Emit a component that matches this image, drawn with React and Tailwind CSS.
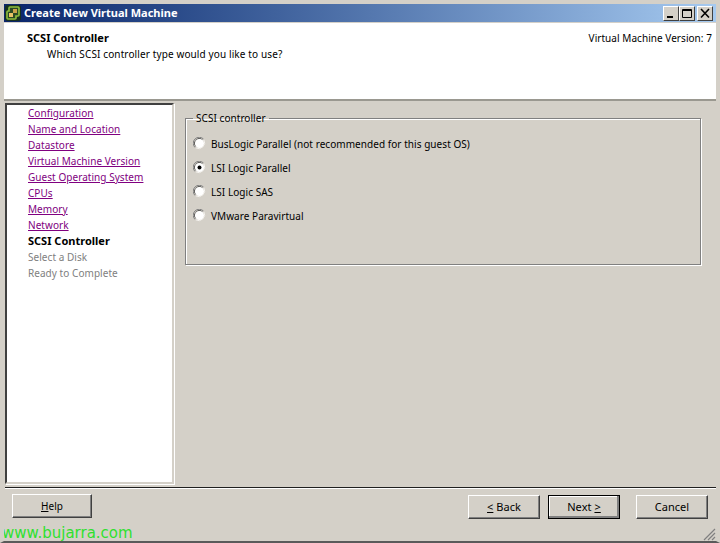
const font = "font-['Noto_Sans','Liberation_Sans',sans-serif]";

const visited = [
  "Configuration",
  "Name and Location",
  "Datastore",
  "Virtual Machine Version",
  "Guest Operating System",
  "CPUs",
  "Memory",
  "Network",
];

const options = [
  { label: "BusLogic Parallel (not recommended for this guest OS)" },
  { label: "LSI Logic Parallel", checked: true },
  { label: "LSI Logic SAS" },
  { label: "VMware Paravirtual" },
];

function VmLogo() {
  return (
    <svg width="16" height="16" viewBox="0 0 16 16" className="shrink-0">
      <rect x="0" y="0" width="16" height="16" rx="3" fill="#16301f" />
      <path d="M5 2h8a1 1 0 0 1 1 1v7a1 1 0 0 1-1 1h-2v2a1 1 0 0 1-1 1H3a1 1 0 0 1-1-1V7a1 1 0 0 1 1-1h1V3a1 1 0 0 1 1-1z" fill="#2b4a24" stroke="#8fc03c" strokeWidth="1.6" />
      <rect x="4" y="8" width="4" height="4" fill="#e8c468" />
      <rect x="8" y="4" width="4" height="4" fill="#c9a24a" />
    </svg>
  );
}

function CaptionButton({ children }) {
  return (
    <div className="w-[16px] h-[15px] bg-[#d4d0c8] border border-t-white border-l-white border-r-[#404040] border-b-[#404040] flex items-center justify-center">
      <svg width="12" height="11" viewBox="0 0 12 11">{children}</svg>
    </div>
  );
}

function Radio({ checked }) {
  return (
    <svg width="13" height="13" viewBox="0 0 13 13" className="shrink-0">
      <path d="M2 10.5A6 6 0 0 1 10.5 2" fill="none" stroke="#808080" strokeWidth="1" />
      <path d="M3 9.5A4.6 4.6 0 0 1 9.5 3" fill="none" stroke="#404040" strokeWidth="1" />
      <circle cx="6.5" cy="6.5" r="4.5" fill="#ffffff" />
      <path d="M10.8 2.6A6 6 0 0 1 2.6 10.8" fill="none" stroke="#f4f2ee" strokeWidth="1" />
      {checked && <circle cx="6.5" cy="6.5" r="2" fill="#000000" />}
    </svg>
  );
}

function Button({ className, children }) {
  return (
    <button className={"bg-[#d4d0c8] border border-t-white border-l-white border-r-[#404040] border-b-[#404040] text-black " + className}>
      {children}
    </button>
  );
}

export default function App() {
  return (
    <div className={"relative w-[720px] h-[543px] overflow-hidden bg-[#d4d0c8] border-t-[4px] border-l-[4px] border-r-[4px] border-b-[2px] border-t-[#d4d0c8] border-l-[#d4d0c8] border-r-[#d4d0c8] border-b-[#5a5a5a] flex flex-col text-[10px] tracking-[0.05px] leading-[16px] text-black " + font}>
      {/* Title bar */}
      <div className="h-[18px] shrink-0 bg-gradient-to-r from-[#0a246a] to-[#a6caf0] flex items-center justify-between pr-[3px]">
        <div className="flex items-center gap-[3px] pl-[1px]">
          <VmLogo />
          <span className="text-[11px] tracking-normal font-bold text-white">Create New Virtual Machine</span>
        </div>
        <div className="flex items-center">
          <CaptionButton>
            <rect x="2" y="8" width="6" height="2" fill="#000" />
          </CaptionButton>
          <CaptionButton>
            <path d="M1.5 1.5h9v8h-9z M1 2.5h10" fill="none" stroke="#000" strokeWidth="1" />
          </CaptionButton>
          <div className="ml-[2px]">
            <CaptionButton>
              <path d="M2 1l8 8.5M10 1l-8 8.5" fill="none" stroke="#000" strokeWidth="1.6" />
            </CaptionButton>
          </div>
        </div>
      </div>

      {/* Header */}
      <div className="h-[78px] shrink-0 mt-[1px] bg-white border-b-2 border-b-[#9a9890] flex justify-between pl-[23px] pr-[4px] pt-[7px]">
        <div>
          <div className="font-bold text-[11px] tracking-normal">SCSI Controller</div>
          <div className="pl-[20px] tracking-[0.12px]">Which SCSI controller type would you like to use?</div>
        </div>
        <div>Virtual Machine Version: 7</div>
      </div>

      {/* Body */}
      <div className="flex-1 min-h-0 flex pt-[2px] pl-[1px]">
        <div className="w-[169px] h-[381px] shrink-0 bg-white border-2 border-t-[#404040] border-l-[#404040] border-r-[#d4d0c8] border-b-[#d4d0c8] shadow-[1px_1px_0_#ffffff] pl-[21px]">
          {visited.map((name) => (
            <div key={name} className="text-[#800080] underline">{name}</div>
          ))}
          <div className="font-bold text-[11px] tracking-normal">SCSI Controller</div>
          <div className="text-[#808080]">Select a Disk</div>
          <div className="text-[#808080]">Ready to Complete</div>
        </div>

        <div className="flex-1 pl-[11px] pr-[15px] pt-[8px]">
          <fieldset className="h-[154px] border border-[#808080] shadow-[1px_1px_0_#ffffff,inset_1px_1px_0_#ffffff] pl-[7px] m-0">
            <legend className="px-[3px] leading-[14px]">SCSI controller</legend>
            <div className="flex flex-col gap-[8px] pt-[10px]">
              {options.map((o) => (
                <div key={o.label} className="flex items-center gap-[5px] h-[16px]">
                  <Radio checked={o.checked} />
                  <span className="pt-[2px]">{o.label}</span>
                </div>
              ))}
            </div>
          </fieldset>
        </div>
      </div>

      {/* Footer */}
      <div className="h-[54px] shrink-0 border-t border-t-[#202020] shadow-[inset_0_1px_0_#ffffff] ml-[1px] pt-[6px] pl-[7px] pr-[8px] flex items-start">
        <Button className="w-[80px] h-[24px] text-[10px] shadow-[inset_-1px_-1px_0_#808080]"><span className="underline">H</span>elp</Button>
        <div className="flex-1" />
        <div className="flex mt-[1px]">
          <Button className="w-[72px] h-[24px] text-[11px] shadow-[inset_-1px_-1px_0_#808080]"><span className="underline">&lt;</span> Back</Button>
          <Button className="w-[72px] h-[24px] ml-[8px] text-[11px] outline outline-1 -outline-offset-1 outline-black shadow-[inset_-2px_-2px_0_#808080,inset_1px_1px_0_#ffffff]">Next <span className="underline">&gt;</span></Button>
          <Button className="w-[72px] h-[24px] ml-[16px] text-[11px] shadow-[inset_-1px_-1px_0_#808080]">Cancel</Button>
        </div>
      </div>

      {/* Watermark over the window */}
      <div className="absolute left-[-2px] bottom-[-1px] font-['DejaVu_Sans',sans-serif] text-[15px] leading-[18px] tracking-normal text-[#2fe02f]">www.bujarra.com</div>

      {/* Resize grip */}
      <svg width="14" height="14" viewBox="0 0 14 14" className="absolute right-0 bottom-0">
        <path d="M13 2L2 13M13 6L6 13M13 10L10 13" stroke="#808080" strokeWidth="1.2" />
      </svg>
    </div>
  );
}
